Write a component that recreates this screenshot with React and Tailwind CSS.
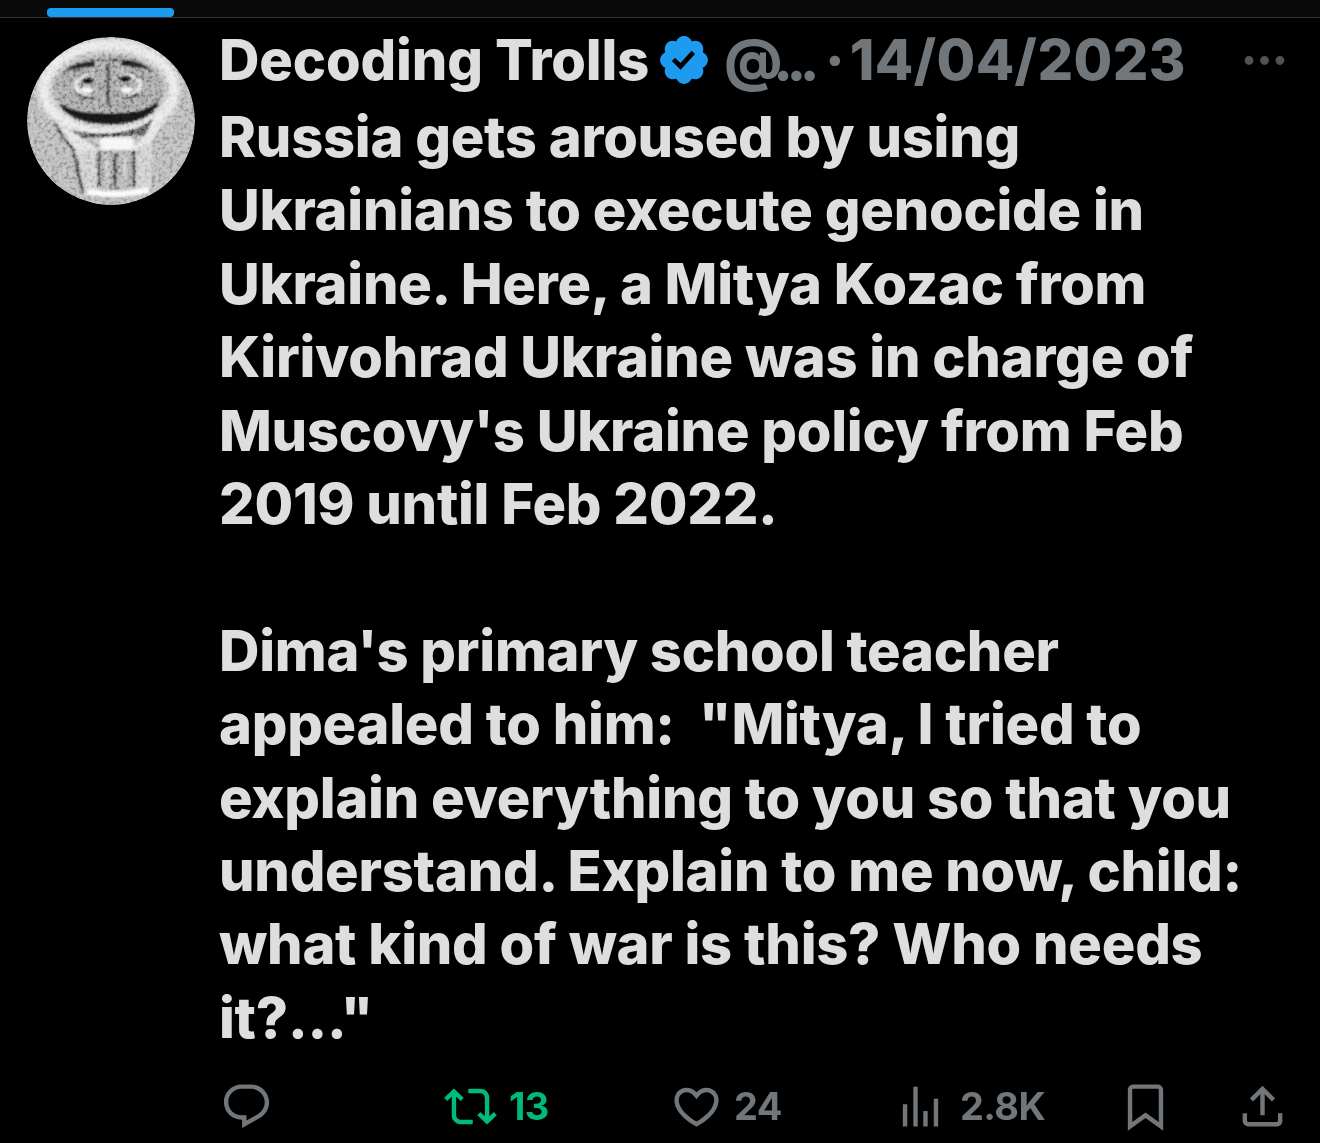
const P = {
  reply: "M1.751 10c0-4.42 3.584-8 8.005-8h4.366c4.49 0 8.129 3.64 8.129 8.13 0 2.96-1.607 5.68-4.196 7.11l-8.054 4.46v-3.69h-.067c-4.49.1-8.183-3.51-8.183-8.01zm8.005-6c-3.317 0-6.005 2.69-6.005 6 0 3.37 2.77 6.08 6.138 6.01l.351-.01h1.761v2.3l5.087-2.81c1.951-1.08 3.163-3.13 3.163-5.36 0-3.39-2.744-6.13-6.129-6.13H9.756z",
  retweet: "M4.5 3.88l4.432 4.14-1.364 1.46L5.5 7.55V16c0 1.1.896 2 2 2H13v2H7.5c-2.209 0-4-1.79-4-4V7.55L1.432 9.48.068 8.02 4.5 3.88zM16.5 6H11V4h5.5c2.209 0 4 1.79 4 4v8.45l2.068-1.93 1.364 1.46-4.432 4.14-4.432-4.14 1.364-1.46 2.068 1.93V8c0-1.1-.896-2-2-2z",
  like: "M16.697 5.5c-1.222-.06-2.679.51-3.89 2.16l-.805 1.09-.806-1.09C9.984 6.01 8.526 5.44 7.304 5.5c-1.243.07-2.349.78-2.91 1.91-.552 1.12-.633 2.78.479 4.82 1.074 1.97 3.257 4.27 7.129 6.61 3.87-2.34 6.052-4.64 7.126-6.61 1.111-2.04 1.03-3.7.477-4.82-.561-1.13-1.666-1.84-2.908-1.91zm4.187 7.69c-1.351 2.48-4.001 5.12-8.379 7.67l-.503.3-.504-.3c-4.379-2.55-7.029-5.19-8.382-7.67-1.36-2.5-1.41-4.86-.514-6.67.887-1.79 2.647-2.91 4.601-3.01 1.651-.09 3.368.56 4.798 2.01 1.429-1.45 3.146-2.1 4.796-2.01 1.954.1 3.714 1.22 4.601 3.01.896 1.81.846 4.17-.514 6.67z",
  views: "M8.75 21V3h2v18h-2zM18 21V8.5h2V21h-2zM4 21l.004-10h2L6 21H4zm9.248 0v-7h2v7h-2z",
  bookmark: "M4 4.5C4 3.12 5.119 2 6.5 2h11C18.881 2 20 3.12 20 4.5v18.44l-8-5.71-8 5.71V4.5zM6.5 4c-.276 0-.5.22-.5.5v14.56l6-4.29 6 4.29V4.5c0-.28-.224-.5-.5-.5h-11z",
  share: "M12 2.59l5.7 5.7-1.41 1.42L13 6.41V16h-2V6.41l-3.3 3.3-1.41-1.42L12 2.59zM21 15l-.02 3.51c0 1.38-1.12 2.49-2.5 2.49H5.5C4.11 21 3 19.88 3 18.5V15h2v3.5c0 .28.22.5.5.5h12.98c.28 0 .5-.22.5-.5L19 15h2z",
  verified: "M22.25 12c0-1.43-.88-2.67-2.19-3.34.46-1.39.2-2.9-.81-3.91s-2.52-1.27-3.91-.81c-.66-1.31-1.91-2.19-3.34-2.19s-2.67.88-3.33 2.19c-1.4-.46-2.91-.2-3.92.81s-1.26 2.52-.8 3.91c-1.31.67-2.2 1.91-2.2 3.34s.89 2.67 2.2 3.34c-.46 1.39-.21 2.9.8 3.91s2.52 1.26 3.91.81c.67 1.31 1.91 2.19 3.34 2.19s2.68-.88 3.34-2.19c1.39.45 2.9.2 3.91-.81s1.27-2.52.81-3.91c1.31-.67 2.19-1.91 2.19-3.34z",
  check: "M10.54 16.2L6.8 12.46l1.41-1.42 2.26 2.26 4.8-5.23 1.47 1.36-6.2 6.77z",
  more: "M3 12c0-1.1.9-2 2-2s2 .9 2 2-.9 2-2 2-2-.9-2-2zm9 2c1.1 0 2-.9 2-2s-.9-2-2-2-2 .9-2 2 .9 2 2 2zm7 0c1.1 0 2-.9 2-2s-.9-2-2-2-2 .9-2 2 .9 2 2 2z",
};

function Icon({ d, className }) {
  return (
    <svg viewBox="0 0 24 24" fill="currentColor" className={className}>
      <path d={d} />
    </svg>
  );
}

function Avatar() {
  return (
    <svg viewBox="0 0 168 168" className="w-[168px] h-[168px] shrink-0 rounded-full">
      <defs>
        <filter id="grain" x="0" y="0" width="100%" height="100%">
          <feTurbulence type="fractalNoise" baseFrequency="0.28" numOctaves="3" seed="4" />
          <feColorMatrix values="3 0 0 0 -1  3 0 0 0 -1  3 0 0 0 -1  0 0 0 0 1" />
        </filter>
        <filter id="soft"><feGaussianBlur stdDeviation="0.9" /></filter>
        <filter id="softer"><feGaussianBlur stdDeviation="2.5" /></filter>
      </defs>
      <circle cx="84" cy="84" r="84" fill="#b4b4b4" />
      <ellipse cx="82" cy="52" rx="65" ry="44" fill="none" stroke="#e8e8e8" strokeWidth="12" filter="url(#softer)" />
      <g filter="url(#soft)">
        <path d="M36 90 C60 100 104 100 126 82 L118 98 L48 102z" fill="#5c5c5c" />
        <path d="M30 82 C44 94 62 106 74 114 L52 122 C44 108 36 96 30 82z" fill="#e0e0e0" />
        <path d="M140 62 C132 82 122 98 106 110 L112 118 C126 104 138 86 143 68z" fill="#e4e4e4" />
        <path d="M50 114 C54 130 56 146 60 156 L72 154 V112z" fill="#cccccc" />
        <path d="M108 112 V152 L124 150 C124 136 124 124 128 104z" fill="#cccccc" />
        <ellipse cx="82" cy="52" rx="55" ry="33" fill="#a0a0a0" />
        <path d="M32 66 C48 76 64 76 84 76 C106 76 122 74 132 62 C130 78 108 87 84 87 C58 87 38 80 32 66z" fill="#161616" />
        <path d="M36 36 C48 22 70 24 82 23 C100 22 114 22 126 35 C110 27 60 27 36 36z" fill="#222222" />
        <ellipse cx="81" cy="48" rx="32" ry="16" fill="none" stroke="#e2e2e2" strokeWidth="4.5" />
        <path d="M50 56 C56 65 106 65 112 56" fill="none" stroke="#333333" strokeWidth="3" />
        <path d="M50 42 C54 34 62 34 68 34 M96 34 C104 34 110 36 112 42" fill="none" stroke="#555555" strokeWidth="2" />
        <rect x="68" y="24" width="27" height="46" rx="2" fill="#a2a2a2" />
        <rect x="79" y="26" width="4" height="43" fill="#505050" />
        <ellipse cx="61" cy="44" rx="6" ry="3" fill="#0c0c0c" />
        <ellipse cx="98" cy="42" rx="6" ry="3" fill="#0c0c0c" />
        <ellipse cx="60" cy="53" rx="6" ry="3" fill="#f6f6f6" />
        <ellipse cx="100" cy="53" rx="6" ry="3" fill="#f6f6f6" />
        <path d="M46 112 C50 128 52 144 56 154" fill="none" stroke="#4a4a4a" strokeWidth="3" />
        <path d="M28 86 C34 98 42 108 48 114" fill="none" stroke="#5c5c5c" strokeWidth="3" />
        <path d="M74 114 V152 H107 V114z" fill="#a8a8a8" />
        <rect x="73" y="101" width="34" height="12" rx="4" fill="#f6f6f6" />
        <path d="M72 114 V150 M107 114 V150" stroke="#3a3a3a" strokeWidth="3" fill="none" />
        <path d="M88 116 V150" stroke="#3a3a3a" strokeWidth="3" fill="none" />
        <path d="M80 118 V150 M98 118 V148" stroke="#c4c4c4" strokeWidth="4" fill="none" />
        <path d="M60 155 Q90 160 122 153" stroke="#fafafa" strokeWidth="6" fill="none" />
      </g>
      <rect width="168" height="168" filter="url(#grain)" opacity="0.3" className="mix-blend-overlay" />
    </svg>
  );
}

const body = `Russia gets aroused by using
Ukrainians to execute genocide in
Ukraine. Here, a Mitya Kozac from
Kirivohrad Ukraine was in charge of
Muscovy's Ukraine policy from Feb
2019 until Feb 2022.

Dima's primary school teacher
appealed to him:  "Mitya, I tried to
explain everything to you so that you
understand. Explain to me now, child:
what kind of war is this? Who needs
it?..."`;

export default function App() {
  return (
    <div className="w-[1320px] h-[1143px] overflow-hidden bg-black font-['Inter',sans-serif] font-extrabold">
      <div className="h-[18px] bg-[#0a0a0a] border-b border-[#2f3336] pl-[47px] flex items-end">
        <div className="w-[127px] h-[9px] rounded-[4px] bg-[#1d9bf0]" />
      </div>
      <div className="flex pl-[27px] pt-[19px] gap-[24px]">
        <Avatar />
        <div className="flex-1 min-w-0">
          <div className="flex items-center h-[46px] text-[56px] leading-[46px] tracking-[-0.15px] whitespace-nowrap">
            <span className="text-[#dedede]">Decoding Trolls</span>
            <span className="relative w-[56px] h-[56px] ml-[7px] shrink-0 text-[#1d9bf0]">
              <Icon d={P.verified} className="absolute inset-0 w-full h-full" />
              <Icon d={P.check} className="absolute inset-0 w-full h-full text-black" />
            </span>
            <span className="ml-[12px] text-[#71767b] tracking-[-6.5px]">@...</span>
            <span className="ml-[12px] text-[#71767b]">·</span>
            <span className="ml-[5px] text-[#71767b] tracking-[0.4px]">14/04/2023</span>
            <Icon d={P.more} className="ml-[52px] w-[53px] h-[53px] text-[#4f5356]" />
          </div>
          <div className="mt-[18px] text-[56px] leading-[73.4px] tracking-[-0.25px] text-[#dedede] whitespace-pre">{body}</div>
          <div className="mt-[25px] flex items-center text-[#71767b] text-[38px] leading-[53px] font-bold tracking-[-0.6px]">
            <div className="w-[225px] flex"><Icon d={P.reply} className="ml-px w-[53px] h-[53px]" /></div>
            <div className="w-[226px] flex items-center text-[#00ba7c] gap-[12px]">
              <Icon d={P.retweet} className="w-[53px] h-[53px]" /><span>13</span>
            </div>
            <div className="w-[224px] flex items-center gap-[11px]">
              <Icon d={P.like} className="w-[53px] h-[53px]" /><span>24</span>
            </div>
            <div className="w-[225px] flex items-center gap-[13px]">
              <Icon d={P.views} className="w-[53px] h-[53px]" /><span>2.8K</span>
            </div>
            <div className="w-[117px] flex"><Icon d={P.bookmark} className="w-[53px] h-[53px]" /></div>
            <Icon d={P.share} className="w-[53px] h-[53px]" />
          </div>
        </div>
      </div>
    </div>
  );
}
